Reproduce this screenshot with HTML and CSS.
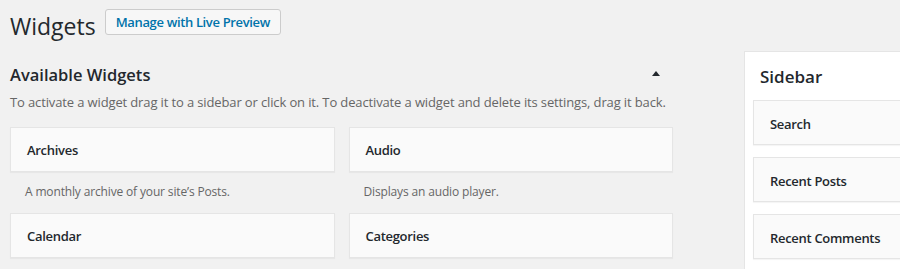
FILE: index.html
```html
<!DOCTYPE html>
<html lang="en-US">
<head>
    <title>Widgets</title>

    <link rel="stylesheet" href="styles.css">
</head>
<body>

    <div class="wrap">

        <div class="page-header">
            <h1 class="page-header__title">Widgets</h1>
            <a class="page-header__button" href="#">Manage with Live Preview</a>
        </div>

        <div class="widgets">

            <div class="available">
                <div class="available__header">
                    <h2 class="available__title">Available Widgets</h2>
                    <span class="available__toggle"></span>
                </div>
                <p class="available__description">To activate a widget drag it to a sidebar or click on it. To deactivate a widget and delete its settings, drag it back.</p>

                <div class="available__list">
                    <div class="widget">
                        <div class="widget__top">Archives</div>
                        <div class="widget__description">A monthly archive of your site’s Posts.</div>
                    </div>
                    <div class="widget">
                        <div class="widget__top">Audio</div>
                        <div class="widget__description">Displays an audio player.</div>
                    </div>
                    <div class="widget">
                        <div class="widget__top">Calendar</div>
                    </div>
                    <div class="widget">
                        <div class="widget__top">Categories</div>
                    </div>
                </div>
            </div>

            <div class="sidebar">
                <h2 class="sidebar__title">Sidebar</h2>
                <div class="sidebar__widget">Search</div>
                <div class="sidebar__widget">Recent Posts</div>
                <div class="sidebar__widget">Recent Comments</div>
            </div>

        </div>

    </div>

</body>
</html>
```

FILE: styles.css
```css
* {
    box-sizing: border-box;
}

body {
    background-color: #f1f1f1;
    color: #23282d;
    margin: 0;
    padding: 0;
    font-family: "Open Sans", "Noto Sans", sans-serif;
    font-size: 13px;
    line-height: 1.4;
    overflow: hidden;
}

.wrap {
    padding: 0 0 0 10px;
}

.page-header {
    display: flex;
    align-items: flex-start;
}

.page-header__title {
    margin: 0;
    padding-top: 12px;
    font-size: 23px;
    font-weight: 400;
    line-height: 29px;
}

.page-header__button {
    margin: 9px 0 0 9px;
    height: 26px;
    padding: 0 10px;
    line-height: 24px;
    font-size: 13px;
    font-weight: 600;
    letter-spacing: -0.35px;
    color: #0073aa;
    text-decoration: none;
    background-color: #f7f7f7;
    border: 1px solid #ccc;
    border-radius: 3px;
}

.widgets {
    display: flex;
    align-items: flex-start;
    margin-top: 10px;
}

.available {
    width: 663px;
    flex-shrink: 0;
    padding-top: 12px;
}

.available__header {
    display: flex;
    align-items: center;
    justify-content: space-between;
    padding-right: 13px;
}

.available__title {
    margin: 0;
    font-size: 16.5px;
    font-weight: 600;
    line-height: 24px;
}

.available__toggle {
    width: 0;
    height: 0;
    margin-bottom: 4px;
    border-left: 4px solid transparent;
    border-right: 4px solid transparent;
    border-bottom: 5px solid #23282d;
}

.available__description {
    margin: 6px 0 15px;
    color: #666;
    line-height: 19px;
    letter-spacing: -0.13px;
    white-space: nowrap;
}

.available__list {
    display: grid;
    grid-template-columns: 1fr 1fr;
    column-gap: 14px;
}

.widget__top {
    height: 45px;
    padding: 2px 16px 0;
    line-height: 41px;
    font-weight: 600;
    letter-spacing: -0.3px;
    background-color: #fafafa;
    border: 1px solid #e5e5e5;
    box-shadow: 0 1px 1px rgba(0,0,0,0.04);
}

.widget__description {
    padding: 10px 15px 11px;
    font-size: 12px;
    letter-spacing: -0.15px;
    color: #666;
    line-height: 20px;
}

.sidebar {
    width: 300px;
    flex-shrink: 0;
    margin-left: 71px;
    padding: 13px 8px 20px;
    background-color: #fff;
    border: 1px solid #e5e5e5;
}

.sidebar__title {
    margin: 0 0 11px 7px;
    font-size: 17px;
    font-weight: 600;
    line-height: 24px;
}

.sidebar__widget {
    height: 45px;
    margin-bottom: 12px;
    padding: 3px 16px 0;
    line-height: 40px;
    font-weight: 600;
    letter-spacing: -0.3px;
    background-color: #fafafa;
    border: 1px solid #e5e5e5;
    box-shadow: 0 1px 1px rgba(0,0,0,0.04);
}
```
